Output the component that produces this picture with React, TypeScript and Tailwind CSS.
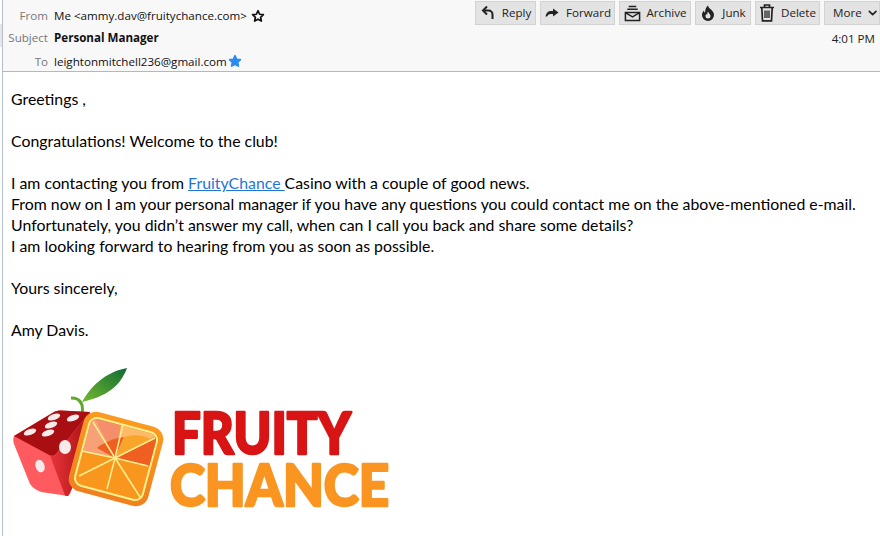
import { ChevronDown } from "lucide-react";
import type { ReactNode } from "react";

const uiFont = "font-['Open_Sans',sans-serif]";

function ToolButton({ label, icon, width }: { label: string; icon?: ReactNode; width: string }) {
  return (
    <div className={`flex h-6 items-center justify-center gap-1.5 border border-[#d2d2d2] bg-[#e3e3e3] text-[11.6px] text-[#222] ${width}`}>
      {icon}
      <span>{label}</span>
    </div>
  );
}

function Reply() {
  return (
    <svg width="16" height="16" viewBox="0 0 16 16" fill="none" stroke="#222" strokeWidth="2">
      <path d="M7 1.500 3 5.500 7 9.500" />
      <path d="M3.500 5.500h5a4 4 0 0 1 4 4V14" />
    </svg>
  );
}

function Forward() {
  return (
    <svg width="16" height="16" viewBox="0 0 16 16">
      <path d="M9 3.500 14.500 7.500 9 11.500V9H7c-2 0-3 .8-4 2.500H1.500C2 8 4 6 7 6h2z" fill="#222" />
    </svg>
  );
}

function Archive() {
  return (
    <svg width="17" height="17" viewBox="0 0 18 18" fill="none" stroke="#222" strokeWidth="1.600">
      <path d="M5 1.500h8M3.500 4.500h11" />
      <path d="M1.500 8h15v8.500h-15z" />
      <path d="M1.500 8 9 12.500 16.500 8" />
    </svg>
  );
}

function Junk() {
  return (
    <svg width="16" height="16" viewBox="0 0 16 16">
      <path d="M8 .5c.5 2.500 2 3 3.500 4.500C13.500 7 14 8.500 14 10a6 6 0 0 1-12 0c0-2 .8-3.300 2-4.500 0 1 .3 1.800 1 2.200C5.200 5 5.800 2.500 8 .5z" fill="#222" />
      <path d="M8 6.500c.3 1.500 2.500 2.700 2.500 4.500a2.500 2.500 0 0 1-5 0c0-1 .5-1.500 1-2 .2.500.5.700.8.700C7.200 8.500 7.300 7.500 8 6.500z" fill="#e3e3e3" />
    </svg>
  );
}

function Trash() {
  return (
    <svg width="16" height="18" viewBox="0 0 16 18" fill="none" stroke="#222" strokeWidth="1.700">
      <path d="M1 3.500h14M5.500 3V1h5v2" />
      <path d="M2.800 3.500 3.500 16.800h9l.7-13.300" />
      <path d="M6 6.500v7.500M8 6.500v7.500M10 6.500v7.500" strokeWidth="1.300" />
    </svg>
  );
}

function Star({ filled }: { filled?: boolean }) {
  return (
    <svg width="14" height="14" viewBox="0 0 24 24" fill={filled ? "#2a8cf0" : "none"} stroke={filled ? "#2a8cf0" : "#111"} strokeWidth="3" strokeLinejoin="round">
      <path d="m12 3 2.800 6 6.400.8-4.700 4.400 1.200 6.400L12 17.400l-5.700 3.200 1.200-6.400L2.800 9.800 9.200 9z" />
    </svg>
  );
}

// coordinates in the viewBox are the page's own pixels
function Logo() {
  return (
    <svg width="385" height="165" viewBox="10 365 385 165">
      <defs>
        <linearGradient id="leaf" x1="0" y1="1" x2="1" y2="0">
          <stop offset="0" stopColor="#74b82e" />
          <stop offset="1" stopColor="#0f6b34" />
        </linearGradient>
        <linearGradient id="side" x1="0" y1="0" x2="1" y2="0">
          <stop offset="0" stopColor="#e8353a" />
          <stop offset="1" stopColor="#a80f12" />
        </linearGradient>
        <linearGradient id="peel" x1="0" y1="0" x2="0" y2="1">
          <stop offset="0" stopColor="#fb9a20" />
          <stop offset="1" stopColor="#f0801e" />
        </linearGradient>
        <clipPath id="flesh">
          <rect x="82" y="426" width="68" height="68" rx="7" transform="rotate(15 116 460)" />
        </clipPath>
      </defs>
      <path d="M82 403C90 388 105 373 127 369 122 382 113 396 82 403z" fill="url(#leaf)" />
      <path d="M82 416c1-7 1-13-5-16-2-1-4-1-6-1" fill="none" stroke="#62a82c" strokeWidth="3" />
      <path d="M14 437 54 413c2-1 4-1.500 7-1.500L90 413 70 495l-2 2-20-3c-10-1-14-4-18-9L14 445c-1-3-1-6 0-8z" fill="#ff5a5f" />
      <path d="M14 437 54 413c2-1 4-1.500 7-1.500L90 413 55 456c-2 1-3 1-5 .500z" fill="#a90e12" />
      <path d="M50 456.500c2 .500 4 0 5-.500L90 413 72 490l-4 7c-1 0-2 0-3-.500z" fill="url(#side)" />
      <g fill="#f6eaea">
        <ellipse cx="54" cy="418" rx="6.500" ry="3" transform="rotate(-20 54 418)" />
        <ellipse cx="73" cy="419" rx="6.500" ry="3" transform="rotate(-20 73 419)" />
        <ellipse cx="51" cy="426" rx="6.500" ry="3" transform="rotate(-20 51 426)" />
        <ellipse cx="30" cy="433" rx="6.500" ry="3" transform="rotate(-20 30 433)" />
        <ellipse cx="48" cy="434" rx="6.500" ry="3" transform="rotate(-20 48 434)" />
        <ellipse cx="65" cy="448" rx="6" ry="7" />
        <ellipse cx="40" cy="467" rx="4.500" ry="6.500" transform="rotate(-20 40 467)" />
      </g>
      <rect x="75" y="419" width="82" height="82" rx="13" fill="url(#peel)" transform="rotate(15 116 460)" />
      <rect x="80" y="424" width="72" height="72" rx="9" fill="#fff08f" transform="rotate(15 116 460)" />
      <g clipPath="url(#flesh)">
        <rect x="70" y="410" width="95" height="100" fill="#f9961e" />
        <path d="M115 459 93 415 123 415z" fill="#f58e6a" />
        <path d="M115 459 70 450 93 415z" fill="#f6a176" />
        <path d="M115 459 123 415 165 432z" fill="#fdbb6a" />
        <path d="M115 459 165 434 155 468z" fill="#f05f22" />
        <path d="M115 459 97 449C104 443 115 439 124 438z" fill="#f05f22" />
        <path d="M115 459 124 438C135 435 144 436 150 440z" fill="#f9a52c" />
      </g>
      <g stroke="#fff08f" strokeWidth="1.500" fill="none">
        <path d="M115 459 93 423" />
        <path d="M115 459 123 425" />
        <path d="M115 459 155 439" />
        <path d="M115 459 148 467" />
        <path d="M115 459 140 498" />
        <path d="M115 459 107 490" />
        <path d="M115 459 79 477" />
        <path d="M115 459 82 452" />
      </g>
      <g fontFamily="Lato, sans-serif" fontWeight="900" strokeWidth="2.500" strokeLinejoin="round">
        <text x="172" y="455" fontSize="58" fill="#d81414" stroke="#d81414" textLength="179" lengthAdjust="spacingAndGlyphs">FRUITY</text>
        <text x="170" y="507" fontSize="58" fill="#f99520" stroke="#f99520" textLength="219" lengthAdjust="spacingAndGlyphs">CHANCE</text>
      </g>
    </svg>
  );
}

export default function App() {
  return (
    <div className="relative h-[536px] w-[880px] overflow-hidden bg-white pl-0.5">
      <div className="absolute left-0 top-6 h-[23px] w-0.5 bg-[#e6e6e6]" />
      <div className="h-full border-l border-[#b4c0d0]">
        <header className={`flex h-[72px] justify-between border-b border-[#b4b8bc] bg-[#f8f8f8] pt-px text-[11.6px] ${uiFont}`}>
          <div className="flex flex-col pt-px">
            <div className="flex h-[27px] items-center pt-0.5">
              <span className="w-[45px] text-right text-[#777]">From</span>
              <span className="ml-1.5 text-[#111]">Me &lt;ammy.dav@fruitychance.com&gt;</span>
              <span className="ml-1"><Star /></span>
            </div>
            <div className="flex h-5 items-center">
              <span className="w-[45px] text-right text-[#777]">Subject</span>
              <span className="ml-1.5 font-bold text-[#111]">Personal Manager</span>
            </div>
            <div className="mt-1 flex h-5 items-center">
              <span className="w-[45px] text-right text-[#777]">To</span>
              <span className="ml-1.5 text-[#111]">leightonmitchell236@gmail.com</span>
              <span className="ml-px"><Star filled /></span>
            </div>
          </div>
          <div className="flex flex-col items-end">
            <div className="flex gap-1">
              <ToolButton label="Reply" icon={<Reply />} width="w-[61px]" />
              <ToolButton label="Forward" icon={<Forward />} width="w-[75px]" />
              <ToolButton label="Archive" icon={<Archive />} width="w-[72px]" />
              <ToolButton label="Junk" icon={<Junk />} width="w-14" />
              <ToolButton label="Delete" icon={<Trash />} width="w-[65px]" />
              <div className="flex h-6 w-14 items-center gap-1 border border-[#d2d2d2] bg-[#e3e3e3] pl-2 text-[11.6px] text-[#222]">
                More
                <ChevronDown size={14} strokeWidth={3} />
              </div>
            </div>
            <div className="mt-[5px] pr-[5px] text-[#222]">4:01 PM</div>
          </div>
        </header>
        <main className="pl-2 pt-4 font-['Lato',sans-serif] text-[15.85px] leading-[21px] text-black">
          <p>Greetings ,</p>
          <p className="mt-[21px]">Congratulations! Welcome to the club!</p>
          <p className="mt-[21px]">
            I am contacting you from <span className="text-[#1f74dc] underline">FruityChance </span>Casino with a couple of good news.
          </p>
          <p>From now on I am your personal manager if you have any questions you could contact me on the above-mentioned e-mail.</p>
          <p>Unfortunately, you didn’t answer my call, when can I call you back and share some details?</p>
          <p>I am looking forward to hearing from you as soon as possible.</p>
          <p className="mt-[21px]">Yours sincerely,</p>
          <p className="mt-[21px]">Amy Davis.</p>
          <div className="mt-6 -ml-px">
            <Logo />
          </div>
        </main>
      </div>
    </div>
  );
}
